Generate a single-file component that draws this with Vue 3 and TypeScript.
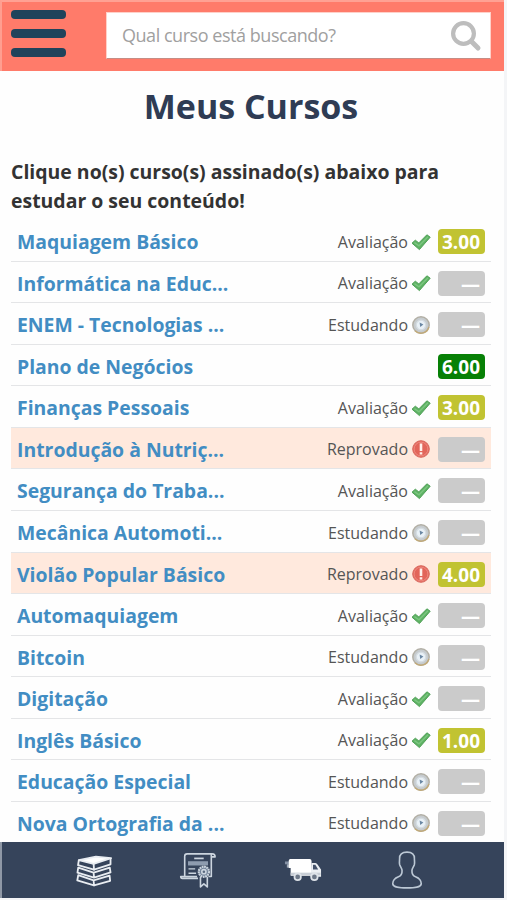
<script setup lang="ts">
type Status = 'Avaliação' | 'Estudando' | 'Reprovado' | ''

interface Course {
  name: string
  status: Status
  grade?: string
}

const courses: Course[] = [
  { name: 'Maquiagem Básico', status: 'Avaliação', grade: '3.00' },
  { name: 'Informática na Educ...', status: 'Avaliação' },
  { name: 'ENEM - Tecnologias ...', status: 'Estudando' },
  { name: 'Plano de Negócios', status: '', grade: '6.00' },
  { name: 'Finanças Pessoais', status: 'Avaliação', grade: '3.00' },
  { name: 'Introdução à Nutriç...', status: 'Reprovado' },
  { name: 'Segurança do Traba...', status: 'Avaliação' },
  { name: 'Mecânica Automoti...', status: 'Estudando' },
  { name: 'Violão Popular Básico', status: 'Reprovado', grade: '4.00' },
  { name: 'Automaquiagem', status: 'Avaliação' },
  { name: 'Bitcoin', status: 'Estudando' },
  { name: 'Digitação', status: 'Avaliação' },
  { name: 'Inglês Básico', status: 'Avaliação', grade: '1.00' },
  { name: 'Educação Especial', status: 'Estudando' },
  { name: 'Nova Ortografia da ...', status: 'Estudando' },
]

function gradeClass(course: Course): string {
  if (!course.grade) return 'empty'
  return Number(course.grade) >= 6 ? 'passed' : 'low'
}
</script>

<template>
  <div class="app">
    <header class="topbar">
      <button class="menu" aria-label="Menu">
        <span></span><span></span><span></span>
      </button>
      <label class="search">
        <input type="text" placeholder="Qual curso está buscando?" />
        <svg class="search-icon" viewBox="0 0 32 32">
          <circle cx="13.5" cy="13.5" r="10.4" fill="none" stroke="#bdbdbd" stroke-width="4.2" />
          <path d="M21.5 21.5 28 28" stroke="#bdbdbd" stroke-width="5" stroke-linecap="round" />
        </svg>
      </label>
    </header>

    <main class="content">
      <h1>Meus Cursos</h1>
      <p class="intro">Clique no(s) curso(s) assinado(s) abaixo para<br />estudar o seu conteúdo!</p>
      <ul class="courses">
        <li v-for="course in courses" :key="course.name" :class="{ failed: course.status === 'Reprovado' }">
          <a class="name">{{ course.name }}</a>
          <span class="status">{{ course.status }}</span>
          <svg v-if="course.status === 'Avaliação'" class="icon" viewBox="0 0 20 20">
            <path d="M1 11.2 4.3 8.2 7.8 10.9 15.9 2.8 19.2 5.2 8.4 17.6Z" fill="#5db263" stroke="#4f9f56" stroke-width="1" stroke-linejoin="round" />
            <path d="M3.4 10.6 8 13.8 17 4.8" fill="none" stroke="#7cc680" stroke-width="1.3" />
          </svg>
          <svg v-else-if="course.status === 'Estudando'" class="icon" viewBox="0 0 20 20">
            <circle cx="10" cy="10" r="8.2" fill="#c6cbce" stroke="#b3b0a6" stroke-width="1.5" />
            <path d="M4 15.8A8.2 8.2 0 0 0 17.8 12" fill="none" stroke="#c2aa78" stroke-width="1.4" />
            <circle cx="10" cy="10" r="4.8" fill="#e9f1f7" stroke="#d5dde2" stroke-width="1.3" />
            <path d="M8.6 7.6 12.4 9.4 9.2 12Z" fill="#6a87a3" />
          </svg>
          <svg v-else-if="course.status === 'Reprovado'" class="icon" viewBox="0 0 20 20">
            <circle cx="10" cy="10" r="8.3" fill="#e2655a" stroke="#d9695f" stroke-width="1" />
            <circle cx="10" cy="10" r="6.9" fill="none" stroke="#ee8a80" stroke-width="1" />
            <path d="M10 4.4V12M10 13.2V15.6" stroke="#fff1ec" stroke-width="2.6" />
          </svg>
          <span class="grade" :class="gradeClass(course)">{{ course.grade ?? '—' }}</span>
        </li>
      </ul>
    </main>

    <nav class="tabs">
      <a aria-label="Cursos">
        <svg viewBox="0 0 40 40" fill="none" stroke="#e9edf2" stroke-width="1.9" stroke-linejoin="round" stroke-linecap="round">
          <path d="M3.4 25.5 2.4 31 20 36.3 37 31.5 36.4 26M19.6 31 36.4 26M3.4 25.5 19.6 31 20 36.3" />
          <path d="M3.4 17.5 2.6 22.8 20 28 37.4 22.5 36.6 17.5M19.6 22.8 36.6 17.5M3.4 17.5 19.6 22.8 20 28" />
          <path d="M4 10 3.2 14.8 20 19.7 37.4 14 37.4 8.2" />
          <path d="M4 9.7 22 6 38 7.6 19.6 13.6Z" fill="#fff" />
          <path d="M19.6 13.6 20 19.7" />
        </svg>
      </a>
      <a aria-label="Certificados">
        <svg viewBox="0 0 40 40" fill="none" stroke="#ccd5df" stroke-width="1.7" stroke-linejoin="round">
          <path d="M20 28.8H3.5Q1.8 28.8 1.8 26.8H19M6 26.8V5.6Q6 3 8.5 3H35Q38 3 38 6.2H34M34 4V26.8H31" />
          <path d="M16 7.8H26" stroke-width="1.8" />
          <path d="M9.5 13H30.5" stroke="#8e9caf" stroke-width="4.5" />
          <path d="M10 18.8H17M10 23.4H18" stroke-width="1.4" />
          <path d="M22.6 27V37.8L26.2 34.6 29.8 37.8V27" />
          <circle cx="26.2" cy="21.8" r="5.4" fill="#73849a" stroke-width="2.2" stroke-dasharray="1.9 .6" />
          <circle cx="26.2" cy="21.8" r="2.2" fill="#5a6a80" />
        </svg>
      </a>
      <a aria-label="Entregas">
        <svg viewBox="0 0 40 40">
          <path d="M1 11H8V14H1Z" fill="#8592a5" />
          <path d="M3 14H8V17.5H3Z" fill="#a1abb9" />
          <path d="M6 8.5H27Q29 8.5 29 10.5V26H7V18H5V10Z" fill="#fff" />
          <path d="M29 12.5H33Q34.5 12.5 35.5 14.5L39 19.5V27H28Z" fill="#eceff3" />
          <path d="M30.5 14.5H33L36 19.5H30.5Z" fill="#43516a" />
          <path d="M7 22.8H38.5V25.5H7Z" fill="#c8ced6" />
          <circle cx="14.4" cy="27.3" r="3.4" fill="#6d7888" stroke="#dde2e8" stroke-width="1.8" />
          <circle cx="32" cy="27.3" r="3.4" fill="#6d7888" stroke="#dde2e8" stroke-width="1.8" />
        </svg>
      </a>
      <a aria-label="Perfil">
        <svg viewBox="0 0 40 40" fill="none" stroke="#bcc8d5" stroke-width="1.7" stroke-linejoin="round">
          <path d="M20 1.2C14.6 1.2 12 3.6 12.2 8C12.3 10 11.6 12 12.3 14.5C13 16.5 14.6 18 14.8 20.5C15 24.5 14 26 11 27C7 28.5 5 31 5 34.5C5.5 38.4 12 38.8 20 38.8C28 38.8 34.5 38.4 35 34.5C35 31 33 28.5 29 27C26 26 25 24.5 25.2 20.5C25.4 18 27 16.5 27.7 14.5C28.4 12 27.7 10 27.8 8C28 3.6 25.4 1.2 20 1.2Z" />
        </svg>
      </a>
    </nav>
  </div>
</template>

<style>
body {
  margin: 0;
  background: #f4f5f7;
  overflow: hidden;
}
</style>

<style scoped>
.app {
  box-sizing: border-box;
  width: 504px;
  height: 898px;
  display: flex;
  flex-direction: column;
  background: #fefefe;
  font-family: 'Open Sans', 'Noto Sans', sans-serif;
}

.topbar {
  box-sizing: border-box;
  flex: none;
  height: 71px;
  padding: 10px 13px 0 11px;
  display: flex;
  justify-content: space-between;
  align-items: flex-start;
  background: #ff7b6a;
  border-top: 2px solid #ffa193;
  border-left: 2px solid #ff9e90;
}

.menu {
  width: 55px;
  padding: 0;
  margin: -2px 0 0 -2px;
  border: 0;
  background: none;
  display: flex;
  flex-direction: column;
  gap: 10px;
}

.menu span {
  height: 9px;
  border-radius: 4px;
  background: #20435b;
}

.search {
  box-sizing: border-box;
  width: 385px;
  height: 47px;
  padding: 0 8px 0 15px;
  display: flex;
  align-items: center;
  background: #fff;
  border: 1px solid #ffd1c9;
  border-bottom-color: #c58d85;
}

.search input {
  flex: 1;
  min-width: 0;
  padding: 0 0 2px;
  border: 0;
  outline: 0;
  background: none;
  font: 400 18px 'Open Sans', sans-serif;
  letter-spacing: -0.46px;
}

.search input::placeholder {
  color: #a0a0a0;
  opacity: 1;
}

.search-icon {
  width: 32px;
  height: 32px;
}

.content {
  flex: 1;
  min-height: 0;
  overflow: hidden;
  padding: 0 13px 0 11px;
}

h1 {
  margin: 11px 0 0;
  height: 48px;
  line-height: 48px;
  text-align: center;
  font-size: 34px;
  font-weight: 700;
  color: #2f3c54;
}

.intro {
  margin: 27px 0 0;
  height: 63.4px;
  line-height: 29px;
  font-size: 19.45px;
  font-weight: 700;
  color: #333;
  white-space: nowrap;
}

.courses {
  margin: 0;
  padding: 0;
  list-style: none;
}

.courses li {
  box-sizing: border-box;
  height: 41.53px;
  padding: 2.5px 6px 0 6px;
  display: flex;
  align-items: center;
  border-bottom: 1.5px solid #e4e5e7;
}

.courses li.failed {
  background: #ffe9dd;
}

.name {
  flex: 1;
  font-size: 19.4px;
  font-weight: 700;
  color: #428dc3;
  white-space: nowrap;
}

.status {
  font-size: 16px;
  color: #555;
}

.icon {
  width: 20px;
  height: 20px;
  margin: 0 7px 0 3px;
}

.grade {
  box-sizing: border-box;
  width: 47px;
  height: 25px;
  padding-right: 5px;
  border-radius: 4px;
  line-height: 26px;
  text-align: right;
  font-size: 19px;
  font-weight: 700;
  color: #fff;
}

.low {
  background: #c1c332;
}

.passed {
  background: #078006;
}

.empty {
  background: #cbcbcb;
}

.tabs {
  box-sizing: border-box;
  flex: none;
  height: 56px;
  padding: 0 45px 0 40px;
  display: grid;
  grid-template-columns: repeat(4, 1fr);
  align-items: center;
  justify-items: center;
  background: #36445b;
  border-left: 2px solid #8f98a6;
}

.tabs svg {
  display: block;
  width: 38px;
  height: 38px;
}
</style>
